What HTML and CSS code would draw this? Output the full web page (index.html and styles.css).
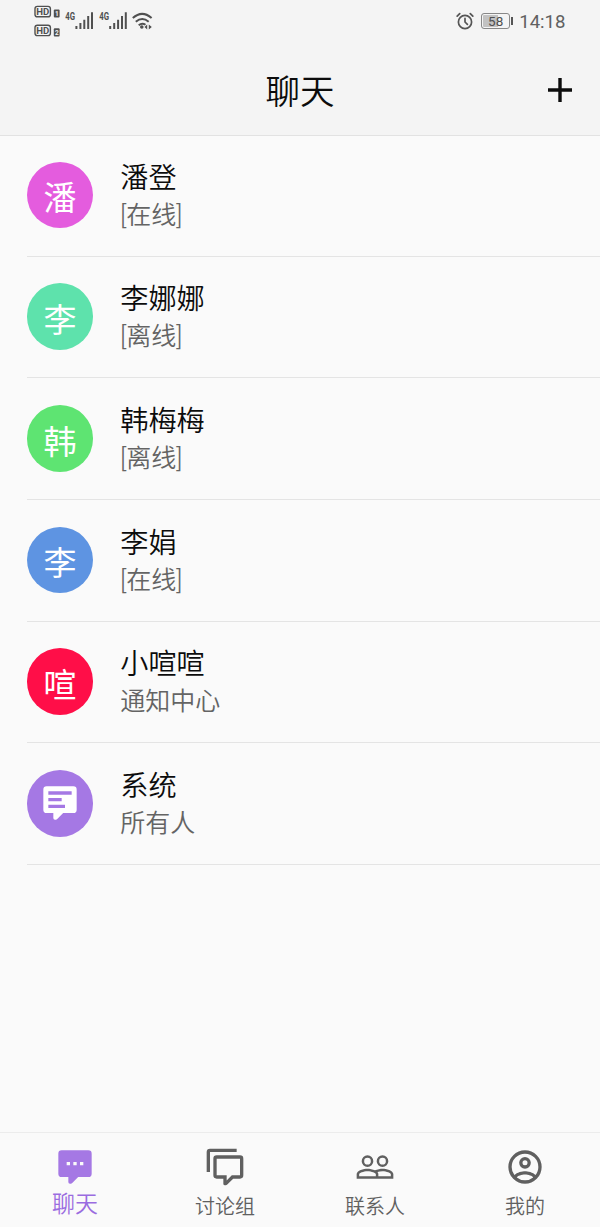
FILE: index.html
```html
<!DOCTYPE html>
<html lang="zh-CN">
<head>
<meta charset="utf-8">
<title>聊天</title>
<link rel="stylesheet" href="styles.css">
</head>
<body>
<div class="app">
  <header class="header">
    <div class="status">
      <svg class="status-left" viewBox="0 0 126 42" width="126" height="42">
        <g fill="none" stroke="#505050" stroke-width="1.4">
          <rect x="4" y="6.4" width="15.4" height="10.4" rx="2.4"/>
          <rect x="4" y="25.2" width="15.4" height="10.4" rx="2.4"/>
        </g>
        <g fill="#505050">
          <rect x="22.8" y="9.4" width="5.8" height="8.2" rx="1"/>
          <rect x="22.8" y="28.2" width="5.8" height="8.2" rx="1"/>
        </g>
        <g class="hd-text">
          <text x="5.2" y="15.3" textLength="13" lengthAdjust="spacingAndGlyphs">HD</text>
          <text x="5.2" y="34.1" textLength="13" lengthAdjust="spacingAndGlyphs">HD</text>
        </g>
        <g class="sim-text">
          <text x="23.9" y="16">1</text>
          <text x="23.9" y="34.8">2</text>
        </g>
        <g class="net-text">
          <text x="34.3" y="20" textLength="9.8" lengthAdjust="spacingAndGlyphs">4G</text>
          <text x="68.3" y="20" textLength="9.8" lengthAdjust="spacingAndGlyphs">4G</text>
        </g>
        <path class="bars" d="M45.4 29v-3M49.4 29v-6M53.3 29v-9.3M57.2 29V16M61 29V12.3M79.2 29v-3M83.2 29v-6M87.1 29v-9.3M91 29V16M94.8 29V12.3"/>
        <path class="wifi" d="M101.8 18.1q9.3-8.4 18.8 0M104.8 21.8q6.4-5.5 12.9 0M107.7 25.2q3.5-2.7 6.8-.4"/>
        <path fill="#505050" d="M109 27a1.8 1.8 0 1 1 3.6 0 1.8 1.8 0 0 1-3.6 0M116.2 24.4v5l-2.7-2.5zM117.8 24.4v5l3-2.5z"/>
      </svg>
      <div class="status-right">
        <svg viewBox="0 0 18 18" width="18" height="18">
          <g fill="none" stroke="#555" stroke-width="1.7" stroke-linecap="round">
            <circle cx="9" cy="10" r="6.6"/>
            <path d="M9 6.4V10l2.4 2.3M1.2 4.2l2.5-2.5M16.8 4.2l-2.5-2.5"/>
          </g>
        </svg>
        <div class="battery"><span class="battery-level">58</span></div>
        <span class="clock">14:18</span>
      </div>
    </div>
    <div class="titlebar">
      <h1 class="title">聊天</h1>
      <svg class="plus" viewBox="0 0 24 24" width="24" height="24"><path d="M12 0v24M0 12h24" stroke="#0c0c0c" stroke-width="3.4"/></svg>
    </div>
  </header>

  <main class="list">
    <div class="row">
      <div class="avatar pink">潘</div>
      <div class="info"><div class="name">潘登</div><div class="sub">[在线]</div></div>
    </div>
    <div class="row">
      <div class="avatar mint">李</div>
      <div class="info"><div class="name">李娜娜</div><div class="sub">[离线]</div></div>
    </div>
    <div class="row">
      <div class="avatar green">韩</div>
      <div class="info"><div class="name">韩梅梅</div><div class="sub">[离线]</div></div>
    </div>
    <div class="row">
      <div class="avatar blue">李</div>
      <div class="info"><div class="name">李娟</div><div class="sub">[在线]</div></div>
    </div>
    <div class="row">
      <div class="avatar red">喧</div>
      <div class="info"><div class="name">小喧喧</div><div class="sub">通知中心</div></div>
    </div>
    <div class="row">
      <div class="avatar purple icon">
        <svg viewBox="0 0 24 24" width="40" height="40"><path fill="#fff" d="M9 22a1 1 0 0 1-1-1v-3H4a2 2 0 0 1-2-2V4a2 2 0 0 1 2-2h16a2 2 0 0 1 2 2v12a2 2 0 0 1-2 2h-6.1l-3.7 3.71c-.2.19-.45.29-.7.29H9M5 5v2h14V5H5m0 4v2h8V9H5m0 4v2h10v-2H5z"/></svg>
      </div>
      <div class="info"><div class="name">系统</div><div class="sub">所有人</div></div>
    </div>
  </main>

  <nav class="tabs">
    <div class="tab active">
      <svg viewBox="0 0 24 24" width="40" height="40"><path d="M9 22a1 1 0 0 1-1-1v-3H4a2 2 0 0 1-2-2V4a2 2 0 0 1 2-2h16a2 2 0 0 1 2 2v12a2 2 0 0 1-2 2h-6.1l-3.7 3.71c-.2.19-.45.29-.7.29H9m8-11V9h-2v2h2m-4 0V9h-2v2h2m-4 0V9H7v2h2z"/></svg>
      <span class="label">聊天</span>
    </div>
    <div class="tab">
      <svg viewBox="0 0 24 24" width="40" height="40"><path d="M12 23a1 1 0 0 1-1-1v-3H7a2 2 0 0 1-2-2V7a2 2 0 0 1 2-2h14a2 2 0 0 1 2 2v10a2 2 0 0 1-2 2h-4.1l-3.7 3.71c-.2.18-.44.29-.7.29H12m1-6v3.08L16.08 17H21V7H7v10h6M3 15H1V3a2 2 0 0 1 2-2h16v2H3v12z"/></svg>
      <span class="label">讨论组</span>
    </div>
    <div class="tab">
      <svg viewBox="0 0 24 24" width="40" height="40"><path d="M16.5 13c-1.2 0-3.07.34-4.5 1-1.43-.67-3.3-1-4.5-1C5.33 13 1 14.08 1 16.25V19h22v-2.75c0-2.17-4.33-3.25-6.5-3.25zm-4 4.5h-10v-1.25c0-.54 2.56-1.75 5-1.75s5 1.21 5 1.75v1.25zm9 0H14v-1.25c0-.46-.2-.86-.52-1.22.88-.3 1.96-.53 3.02-.53 2.44 0 5 1.21 5 1.75v1.25zM7.5 12a3.5 3.5 0 1 0 0-7 3.5 3.5 0 0 0 0 7zm0-5.5a2 2 0 1 1 0 4 2 2 0 0 1 0-4zm9 5.5a3.5 3.5 0 1 0 0-7 3.5 3.5 0 0 0 0 7zm0-5.5a2 2 0 1 1 0 4 2 2 0 0 1 0-4z"/></svg>
      <span class="label">联系人</span>
    </div>
    <div class="tab">
      <svg viewBox="0 0 24 24" width="40" height="40"><path d="M12 2a10 10 0 1 0 0 20 10 10 0 0 0 0-20M7.07 18.28C7.5 17.38 10.12 16.5 12 16.5s4.5.88 4.93 1.78A7.9 7.9 0 0 1 12 20a7.9 7.9 0 0 1-4.93-1.72m11.29-1.45C16.93 15.09 13.46 14.5 12 14.5s-4.93.59-6.36 2.33A7.93 7.93 0 0 1 4 12a8 8 0 0 1 16 0c0 1.82-.62 3.5-1.64 4.83M12 6a3.5 3.5 0 1 0 0 7 3.5 3.5 0 0 0 0-7m0 5a1.5 1.5 0 1 1 0-3 1.5 1.5 0 0 1 0 3z"/></svg>
      <span class="label">我的</span>
    </div>
  </nav>
</div>
</body>
</html>
```
FILE: styles.css
```css
* { box-sizing: border-box; }
body {
  margin: 0;
  background: #fafafa;
  font-family: Roboto, "Noto Sans CJK SC", sans-serif;
  font-weight: 350;
  color: #0c0c0c;
}
svg { display: block; flex: none; }
.app {
  display: flex;
  flex-direction: column;
  height: 1227px;
  overflow: hidden;
}
.header {
  height: 136px;
  flex: none;
  background: #f4f4f4;
  border-bottom: 1px solid #e2e2e2;
}
.status {
  display: flex;
  justify-content: space-between;
  height: 42px;
  padding: 0 34.5px 0 31px;
}
.status-right {
  display: flex;
  align-items: center;
  height: 42px;
  color: #555;
}
.hd-text { font: 700 9.6px Roboto, sans-serif; fill: #505050; }
.sim-text { font: 700 6.5px Roboto, sans-serif; fill: #f4f4f4; }
.net-text { font: 700 10.4px Roboto, sans-serif; fill: #505050; }
.bars { stroke: #505050; stroke-width: 2; fill: none; }
.wifi { stroke: #505050; stroke-width: 2; fill: none; }
.battery {
  display: flex;
  align-items: center;
  margin-left: 7px;
}
.battery-level {
  width: 29px;
  height: 16px;
  border: 1px solid #888;
  border-radius: 3px;
  background: linear-gradient(90deg, #c2c2c2 58%, #f4f4f4 58%);
  box-shadow: inset 0 0 0 1px #f4f4f4;
  font-size: 13.5px;
  font-weight: 400;
  line-height: 14px;
  text-align: center;
  color: #505050;
}
.battery::after {
  content: "";
  width: 2px;
  height: 8px;
  margin-left: 1px;
  background: #555;
}
.clock {
  margin-left: 6px;
  padding-top: 2px;
  font-size: 18.6px;
  font-weight: 400;
  line-height: 40px;
  color: #606060;
}
.titlebar {
  display: grid;
  grid-template-columns: 1fr auto 1fr;
  align-items: center;
  height: 96px;
  padding: 0 28px;
}
.title {
  grid-column: 2;
  margin: 0;
  padding-top: 3px;
  font-size: 34.5px;
  line-height: 50px;
  font-weight: 350;
}
.plus { justify-self: end; }
.list {
  flex: 1;
  padding-left: 26.6px;
}
.row {
  display: flex;
  height: 121.7px;
  border-bottom: 1px solid #e4e4e4;
}
.row:first-child { height: 120.6px; }
.row:first-child .avatar { margin-top: 25.7px; }
.row:first-child .info { margin-top: 23.7px; }
.avatar {
  display: flex;
  align-items: center;
  justify-content: center;
  width: 66.6px;
  height: 66.6px;
  margin-top: 26.8px;
  border-radius: 50%;
  color: #fff;
  font-size: 33px;
  font-weight: 400;
  line-height: 58px;
  padding-top: 8.6px;
}
.avatar.icon { padding-top: 0; }
.pink { background: #e45cde; }
.mint { background: #5ee2ac; }
.green { background: #5ee472; }
.blue { background: #5e94e2; }
.red { background: #ff0e48; }
.purple { background: #a578e4; }
.info {
  margin: 24.8px 0 0 27px;
}
.name {
  font-size: 28.2px;
  line-height: 38px;
}
.sub {
  margin-top: -1px;
  font-size: 25px;
  line-height: 38px;
  color: #646464;
}
.tabs {
  display: grid;
  grid-template-columns: repeat(4, 1fr);
  height: 95px;
  flex: none;
  border-top: 1px solid #ececec;
}
.tab {
  display: flex;
  flex-direction: column;
  align-items: center;
  padding-top: 14px;
  color: #606060;
  fill: #606060;
}
.label {
  margin-top: 5px;
  font-size: 20px;
  line-height: 30px;
}
.active { color: #9a6ce0; fill: #a578e4; }
.active .label { margin-top: 3px; font-size: 23px; }
```
